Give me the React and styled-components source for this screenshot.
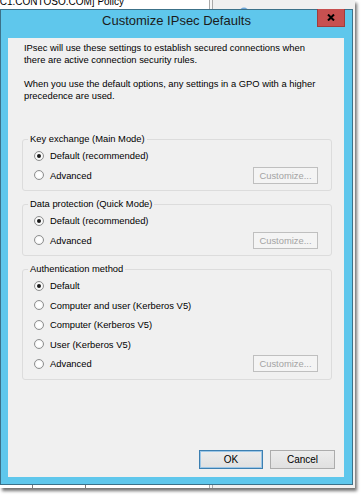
import React from "react";
import styled, { createGlobalStyle } from "styled-components";

const groups = [
    {
        legend: "Key exchange (Main Mode)",
        options: ["Default (recommended)", "Advanced"],
        checked: 0,
    },
    {
        legend: "Data protection (Quick Mode)",
        options: ["Default (recommended)", "Advanced"],
        checked: 0,
    },
    {
        legend: "Authentication method",
        options: [
            "Default",
            "Computer and user (Kerberos V5)",
            "Computer (Kerberos V5)",
            "User (Kerberos V5)",
            "Advanced",
        ],
        checked: 0,
    },
];

const App = () => {
    return (
        <Screen>
            <GlobalStyle />
            <Shot>
                <LeftPane>
                    <Caption>[C1.CONTOSO.COM] Policy</Caption>
                    <ListHeader>
                        <HeaderCell $w={32} />
                        <HeaderCell $w={52} />
                    </ListHeader>
                </LeftPane>
                <Splitter />
                <RightPane>
                    <svg width="10" height="10" viewBox="0 0 10 10">
                        <circle cx="5" cy="5" r="4.5" fill="#6fa6d8" />
                        <path d="M2 4 Q4 2 6 4 T9 5 L8 8 Q5 9 3 7 Z" fill="#6dbb5a" />
                    </svg>
                </RightPane>

                <Dialog>
                    <TitleBar>
                        <Title>Customize IPsec Defaults</Title>
                        <CloseButton>
                            <svg width="8" height="7" viewBox="0 0 8 7">
                                <path d="M1 0.5 L7 6.5 M7 0.5 L1 6.5" stroke="#000" strokeWidth="2" />
                            </svg>
                        </CloseButton>
                    </TitleBar>

                    <Client>
                        <Intro>
                            <p>
                                IPsec will use these settings to establish secured connections when<br />
                                there are active connection security rules.
                            </p>
                            <p>
                                When you use the default options, any settings in a GPO with a higher<br />
                                precedence are used.
                            </p>
                        </Intro>

                        {groups.map((g) => (
                            <GroupBox key={g.legend}>
                                <Legend>{g.legend}</Legend>
                                {g.options.map((opt, i) => (
                                    <Row key={opt}>
                                        <RadioMark $checked={i === g.checked} />
                                        <span>{opt}</span>
                                        {i === g.options.length - 1 && <SmallButton>Customize...</SmallButton>}
                                    </Row>
                                ))}
                            </GroupBox>
                        ))}

                        <Footer>
                            <DialogButton $w={64} $default>OK</DialogButton>
                            <DialogButton $w={65}>Cancel</DialogButton>
                        </Footer>
                    </Client>
                </Dialog>
            </Shot>
        </Screen>
    );
};

const GlobalStyle = createGlobalStyle`
    html, body {
        margin: 0;
        padding: 0;
        background: #fff;
    }
    body {
        font-family: "Liberation Sans", Arial, sans-serif;
        color: #000;
    }
`;

const Screen = styled.div`
    width: 361px;
    height: 496px;
    overflow: hidden;
    background: #fff;
`;

const Shot = styled.div`
    position: relative;
    width: 355px;
    height: 488px;
    display: flex;
    background: #fff;
    box-shadow: 2px 3px 3px rgba(0, 0, 0, 0.55);
`;

const LeftPane = styled.div`
    width: 209px;
    display: flex;
    flex-direction: column;
    justify-content: space-between;
    background: #fff;
`;

const Caption = styled.div`
    margin: -3px 0 0 -3px;
    font-size: 10px;
    line-height: 10px;
    white-space: nowrap;
`;

const ListHeader = styled.div`
    display: flex;
    height: 4px;
`;

const HeaderCell = styled.div`
    width: ${(p) => p.$w}px;
    height: 100%;
    border-right: 1px solid #7a7a7a;
`;

const Splitter = styled.div`
    width: 2px;
    border-left: 1px solid #a9a9a9;
    border-right: 1px solid #a9a9a9;
    background: #f6f6f6;
`;

const RightPane = styled.div`
    flex: 1;
    background: #f0f0f0;
    padding: 3px 0 0 26px;
`;

const Dialog = styled.div`
    position: absolute;
    left: 0;
    top: 9px;
    width: 353px;
    height: 476px;
    box-sizing: border-box;
    border: 1px solid #3c7189;
    background: #5fc7ec;
    display: flex;
    flex-direction: column;
    padding: 0 8px 7px 7px;
`;

const TitleBar = styled.div`
    height: 28px;
    display: grid;
    grid-template-columns: 1fr auto 1fr;
    margin-right: -1px;
`;

const Title = styled.div`
    grid-column: 2;
    padding-top: 3px;
    font-size: 13px;
    line-height: 16px;
    color: #1b1b1b;
    white-space: nowrap;
`;

const CloseButton = styled.div`
    grid-column: 3;
    justify-self: end;
    width: 28px;
    height: 18px;
    margin-top: -1px;
    box-sizing: border-box;
    background: #c75050;
    border: 1px solid #a03c3c;
    border-top: none;
    display: flex;
    align-items: center;
    justify-content: center;
`;

const Client = styled.div`
    flex: 1;
    background: #f0f0f0;
    display: flex;
    flex-direction: column;
    padding: 4px 12px 8px 14px;
`;

const Intro = styled.div`
    padding-left: 2px;
    font-size: 9.4px;
    line-height: 12px;
    white-space: nowrap;

    p {
        margin: 0;
    }
    p + p {
        margin-top: 12px;
    }
`;

const GroupBox = styled.fieldset`
    margin: 31px 0 0;
    padding: 1px 13px 5px 11px;
    border: 1px solid #dcdcdc;
    border-radius: 3px;
    min-width: 0;

    & + & {
        margin-top: 7px;
    }
`;

const Legend = styled.legend`
    margin-left: -6px;
    padding: 0 2px;
    font-size: 9.4px;
    line-height: 12px;
`;

const Row = styled.div`
    display: flex;
    align-items: center;
    height: 19.5px;
    font-size: 9.4px;
    white-space: nowrap;
`;

const RadioMark = styled.span`
    width: 10px;
    height: 10px;
    flex-shrink: 0;
    box-sizing: border-box;
    border-radius: 50%;
    border: 1px solid #8e8f8f;
    background: radial-gradient(circle, #fff 40%, #e4e4e4 100%);
    margin-right: 6px;
    display: flex;
    align-items: center;
    justify-content: center;

    &::after {
        content: "";
        width: 4px;
        height: 4px;
        border-radius: 50%;
        background: ${(p) => (p.$checked ? "#1a1a1a" : "transparent")};
    }
`;

const SmallButton = styled.div`
    margin-left: auto;
    width: 65px;
    height: 17px;
    box-sizing: border-box;
    border: 1px solid #bfbfbf;
    background: #f4f4f4;
    color: #a3a3a3;
    display: flex;
    align-items: center;
    justify-content: center;
    font-size: 9.4px;
`;

const Footer = styled.div`
    margin-top: auto;
    margin-right: -3px;
    display: flex;
    justify-content: flex-end;
    gap: 7px;
`;

const DialogButton = styled.div`
    width: ${(p) => p.$w}px;
    height: 19px;
    box-sizing: border-box;
    border: 1px solid ${(p) => (p.$default ? "#3c7fb1" : "#acacac")};
    box-shadow: ${(p) => (p.$default ? "inset 0 0 0 1px #9cc6e6" : "none")};
    background: linear-gradient(#ececec, #e0e0e0);
    display: flex;
    align-items: center;
    justify-content: center;
    font-size: 10px;
`;

export default App;
